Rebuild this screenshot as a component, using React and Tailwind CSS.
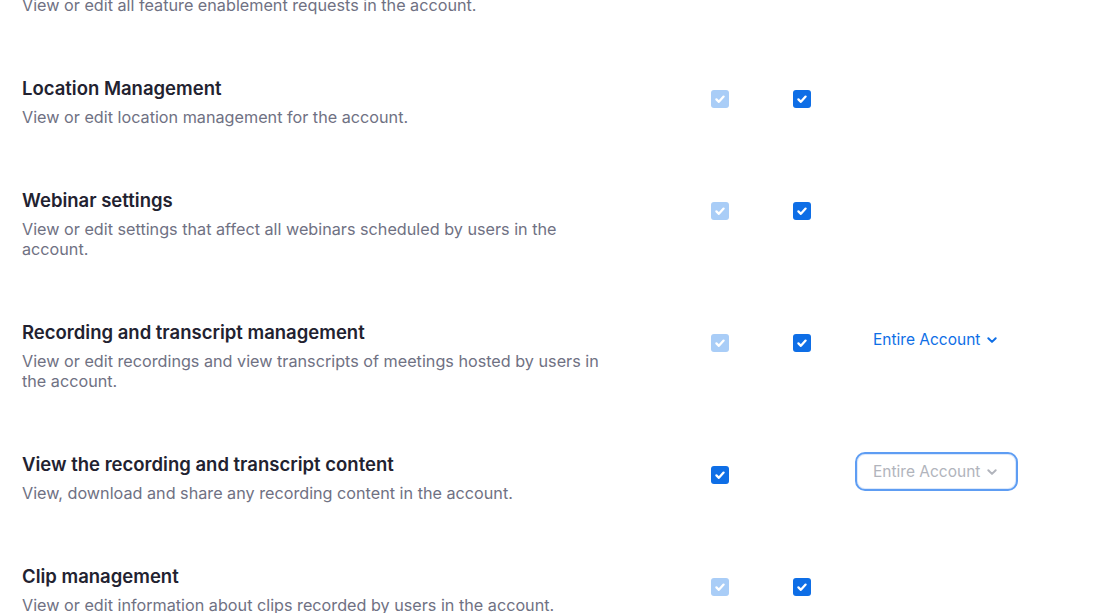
import React from "react";

function Check({ light }) {
  return (
    <div
      className={`w-[18px] h-[18px] rounded-[3px] flex items-center justify-center ${
        light ? "bg-[#a9cdf7]" : "bg-[#0e6ee6]"
      }`}
    >
      <svg width="12" height="12" viewBox="0 0 12 12" fill="none">
        <path d="M2.4 6.4 L4.9 8.8 L9.6 3.6" stroke="white" strokeWidth="2.3" strokeLinecap="round" strokeLinejoin="round" />
      </svg>
    </div>
  );
}

function Chevron({ color }) {
  return (
    <svg width="12" height="12" viewBox="0 0 12 12" fill="none">
      <path d="M2.3 4.2 L6 7.9 L9.7 4.2" stroke={color} strokeWidth="2" strokeLinecap="round" strokeLinejoin="round" />
    </svg>
  );
}

function Dropdown({ focused }) {
  if (focused) {
    return (
      <div className="w-[163px] h-[39px] rounded-[10px] border-2 border-[#5e9df3] shadow-[inset_0_0_0_1px_#dde9fb] flex items-center pl-[16px] gap-[6px]">
        <span className="text-[15.5px] text-[#b1b4bc]">Entire Account</span>
        <Chevron color="#b1b4bc" />
      </div>
    );
  }
  return (
    <div className="mt-px h-[38px] flex items-center pl-[18px] gap-[6px]">
      <span className="text-[15.5px] text-[#0e6ee6]">Entire Account</span>
      <Chevron color="#0e6ee6" />
    </div>
  );
}

const rows = [
  {
    title: "Location Management",
    desc: "View or edit location management for the account.",
    c1: "light",
    c2: "dark",
  },
  {
    title: "Webinar settings",
    desc: "View or edit settings that affect all webinars scheduled by users in the account.",
    c1: "light",
    c2: "dark",
  },
  {
    title: "Recording and transcript management",
    desc: "View or edit recordings and view transcripts of meetings hosted by users in the account.",
    c1: "light",
    c2: "dark",
    dd: "normal",
  },
  {
    title: "View the recording and transcript content",
    desc: "View, download and share any recording content in the account.",
    c1: "dark",
    dd: "focused",
  },
  {
    title: "Clip management",
    desc: "View or edit information about clips recorded by users in the account.",
    c1: "light",
    c2: "dark",
  },
];

export default function App() {
  return (
    <div
      className="w-[1101px] h-[613px] overflow-hidden bg-white"
      style={{ fontFamily: "Inter, 'Noto Sans', sans-serif" }}
    >
      <div className="px-[22px]">
        <div className="mt-[-5px] pb-[31px] text-[16.2px] leading-[20px] text-[#6f7183]">
          View or edit all feature enablement requests in the account.
        </div>
        {rows.map((r) => (
          <div key={r.title} className="grid grid-cols-[689px_82px_62px_1fr] pt-[30px] pb-[31px]">
            <div className="w-[590px]">
              <div className="text-[18.5px] leading-[24px] font-semibold text-[#222230]">{r.title}</div>
              <div className="mt-[7px] text-[16.2px] leading-[20px] text-[#6f7183]">{r.desc}</div>
            </div>
            <div className="pt-[14px]">{r.c1 && <Check light={r.c1 === "light"} />}</div>
            <div className="pt-[14px]">{r.c2 && <Check light={r.c2 === "light"} />}</div>
            <div>{r.dd && <Dropdown focused={r.dd === "focused"} />}</div>
          </div>
        ))}
      </div>
    </div>
  );
}
